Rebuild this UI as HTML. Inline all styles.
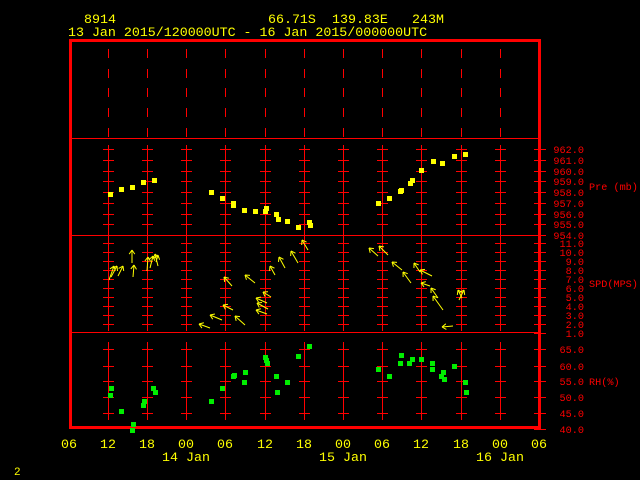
<!DOCTYPE html>
<html><head><meta charset="utf-8">
<style>
html,body{margin:0;padding:0;background:#000;width:640px;height:480px;overflow:hidden}
svg{display:block}
text{font-family:"Liberation Mono",monospace}
</style></head><body>
<svg id="s" width="640" height="480" xmlns="http://www.w3.org/2000/svg">
<g fill="#ffff00" font-size="13.3">
<text x="84" y="23">8914</text>
<text x="268" y="23">66.71S</text>
<text x="332" y="23">139.83E</text>
<text x="412" y="23">243M</text>
<text x="68" y="36">13 Jan 2015/120000UTC - 16 Jan 2015/000000UTC</text>
<g text-anchor="middle">
<text x="69" y="448">06</text><text x="108" y="448">12</text><text x="147" y="448">18</text>
<text x="186" y="448">00</text><text x="225" y="448">06</text><text x="265" y="448">12</text>
<text x="304" y="448">18</text><text x="343" y="448">00</text><text x="382" y="448">06</text>
<text x="421" y="448">12</text><text x="461" y="448">18</text><text x="500" y="448">00</text>
<text x="539" y="448">06</text>
<text x="186" y="461">14 Jan</text><text x="343" y="461">15 Jan</text><text x="500" y="461">16 Jan</text>
</g>
<text x="14" y="475" font-size="11">2</text>
</g>
<g fill="#ff0000" font-size="10.2" id="lab" text-anchor="end"></g>
<g fill="#ff0000" font-size="10.2">
<text x="589" y="190">Pre (mb)</text>
<text x="589" y="287">SPD(MPS)</text>
<text x="589" y="385">RH(%)</text>
</g>
<g id="grid" stroke="#ff0000" stroke-width="1" shape-rendering="crispEdges"></g>
<g id="pts" shape-rendering="crispEdges"></g>
<g id="arr" stroke="#ffff00" stroke-width="1.2" fill="none"></g>
</svg>
<script>
var NS="http://www.w3.org/2000/svg";
function el(p,t,a){var e=document.createElementNS(NS,t);for(var k in a)e.setAttribute(k,a[k]);document.getElementById(p).appendChild(e);return e;}
function L(p,x1,y1,x2,y2,w){el(p,"line",{x1:x1,y1:y1,x2:x2,y2:y2,"stroke-width":w||1});}
L("grid",70.5,39.5,70.5,428.5,3);L("grid",69,40.5,540,40.5,3);
L("grid",539.5,39,539.5,429,3);L("grid",69,427.5,540,427.5,3);
L("grid",70,138.5,540,138.5);L("grid",70,235.5,540,235.5);L("grid",70,332.5,540,332.5);
var xs=[108,147,186,225,265,304,343,382,421,461,500];
var ticks=[149,160,171,181,192,203,214,224,243,252,261,270,279,288,297,306,315,324];
var rh=[349,366,381,397,413];
xs.forEach(function(x){
 var X=x+0.5;
 [[49,58],[69,78],[88,97],[108,117],[128,137]].forEach(function(s){L("grid",X,s[0],X,s[1]);});
 L("grid",X,145,X,331);
 ticks.forEach(function(y){L("grid",x-5,y+0.5,x+6,y+0.5);});
 L("grid",X,342,X,420);
 rh.forEach(function(y){L("grid",x-5,y+0.5,x+6,y+0.5);});
});
var all=ticks.concat([235,333]).concat(rh).concat([429]);
all.forEach(function(y){L("grid",534,y+0.5,546,y+0.5);});
var labs=[["962.0",153],["961.0",164],["960.0",175],["959.0",185],["958.0",196],["957.0",207],["956.0",218],["955.0",228],["954.0",239],
["11.0",247],["10.0",256],["9.0",265],["8.0",274],["7.0",283],["6.0",292],["5.0",301],["4.0",310],["3.0",319],["2.0",328],["1.0",337],
["65.0",353],["60.0",370],["55.0",385],["50.0",401],["45.0",417],["40.0",433]];
labs.forEach(function(l){var t=el("lab","text",{x:584,y:l[1]});t.textContent=l[0];});
var pp=[[110,194],[121,189],[132,187],[143,182],[154,180],[211,192],[222,198],[233,203],[233,205],[244,210],[255,211],[265,211],[266,208],[276,214],[278,219],[287,221],[298,227],[309,222],[310,225],
[378,203],[389,198],[400,191],[401,190],[410,183],[412,180],[421,170],[433,161],[442,163],[454,156],[465,154]];
pp.forEach(function(p){el("pts","rect",{x:p[0]-2,y:p[1]-2,width:5,height:5,fill:"#ffff00"});});
var gp=[[111,388],[110,395],[121,411],[133,424],[132,430],[153,388],[155,392],[144,401],[143,405],[222,388],[211,401],[233,376],[234,375],[244,382],[245,372],[265,357],[266,360],[267,363],[276,376],[277,392],[287,382],[298,356],[309,346],
[378,369],[389,376],[401,355],[400,363],[409,363],[412,359],[421,359],[432,363],[432,369],[443,372],[441,376],[444,379],[454,366],[465,382],[466,392]];
gp.forEach(function(p){el("pts","rect",{x:p[0]-2,y:p[1]-2,width:5,height:5,fill:"#00ee00"});});
var ar=[[109,280,114,266],[111,277,117,266],[118,276,123,266],[133,277,134,265],[132,263,132,250],[147,271,148,257],[150,268,153,256],[158,266,155,254],[156,262,158,255],
[210,328,199,324],[222,320,210,315],[233,310,223,305],[245,325,235,316],[232,286,224,277],[255,283,245,275],
[267,303,256,298],[268,309,257,303],[267,314,256,310],[271,297,263,292],[275,275,270,266],[285,268,279,257],[298,263,291,251],[308,250,302,240],
[378,256,369,248],[388,255,379,246],[402,270,392,262],[411,283,403,272],[420,272,414,263],[432,276,420,270],[430,286,421,283],[438,298,431,288],[443,310,433,296],
[462,298,458,290],[459,300,464,290],[453,326,442,327]];
ar.forEach(function(a){
 L("arr",a[0],a[1],a[2],a[3]);
 var dx=a[0]-a[2],dy=a[1]-a[3],d=Math.sqrt(dx*dx+dy*dy);dx/=d;dy/=d;
 [0.6,-0.6].forEach(function(t){var c=Math.cos(t),s=Math.sin(t);
  var ux=dx*c-dy*s,uy=dx*s+dy*c;L("arr",a[2],a[3],a[2]+ux*5,a[3]+uy*5);});
});
</script>
</body></html>
